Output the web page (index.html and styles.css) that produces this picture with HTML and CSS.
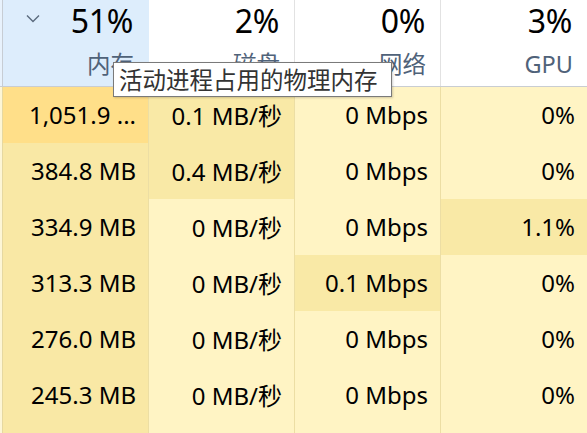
FILE: index.html
```html
<!DOCTYPE html>
<html lang="zh-CN">
<head>
<meta charset="utf-8">
<title>任务管理器</title>
<link rel="stylesheet" href="styles.css">
</head>
<body>
<div class="tm">
  <div class="head">
    <div class="lead lead-head"></div>
    <div class="hcell sorted">
      <svg class="chev" width="14" height="9" viewBox="0 0 14 9"><path d="M1 1.5 L7 7.5 L13 1.5" fill="none" stroke="#5b6b7e" stroke-width="1.4"/></svg>
      <div class="pct">51%</div>
      <div class="lbl">内存</div>
    </div>
    <div class="hcell"><div class="pct">2%</div><div class="lbl">磁盘</div></div>
    <div class="hcell"><div class="pct">0%</div><div class="lbl">网络</div></div>
    <div class="hcell last"><div class="pct">3%</div><div class="lbl">GPU</div></div>
  </div>
  <div class="row">
    <div class="lead"></div>
    <div class="cell h3">1,051.9 ...</div>
    <div class="cell h1">0.1 MB/秒</div>
    <div class="cell">0 Mbps</div>
    <div class="cell last">0%</div>
  </div>
  <div class="row">
    <div class="lead"></div>
    <div class="cell h2">384.8 MB</div>
    <div class="cell h1">0.4 MB/秒</div>
    <div class="cell">0 Mbps</div>
    <div class="cell last">0%</div>
  </div>
  <div class="row">
    <div class="lead"></div>
    <div class="cell h2">334.9 MB</div>
    <div class="cell">0 MB/秒</div>
    <div class="cell">0 Mbps</div>
    <div class="cell last h1">1.1%</div>
  </div>
  <div class="row">
    <div class="lead"></div>
    <div class="cell h2">313.3 MB</div>
    <div class="cell">0 MB/秒</div>
    <div class="cell h1">0.1 Mbps</div>
    <div class="cell last">0%</div>
  </div>
  <div class="row">
    <div class="lead"></div>
    <div class="cell h2">276.0 MB</div>
    <div class="cell">0 MB/秒</div>
    <div class="cell">0 Mbps</div>
    <div class="cell last">0%</div>
  </div>
  <div class="row">
    <div class="lead"></div>
    <div class="cell h2">245.3 MB</div>
    <div class="cell">0 MB/秒</div>
    <div class="cell">0 Mbps</div>
    <div class="cell last">0%</div>
  </div>
  <div class="row">
    <div class="lead"></div>
    <div class="cell h2"></div>
    <div class="cell"></div>
    <div class="cell"></div>
    <div class="cell last"></div>
  </div>
  <div class="tip">活动进程占用的物理内存</div>
</div>
</body>
</html>
```

FILE: styles.css
```css
html, body {
  margin: 0;
  padding: 0;
  background: #fff4c4;
  overflow: hidden;
}

.tm {
  position: relative;
  width: 587px;
  height: 433px;
  overflow: hidden;
  font-family: "Noto Sans", "Noto Sans CJK SC", sans-serif;
  color: #000;
}

.head {
  display: grid;
  grid-template-columns: 3px 146px 146px 146px 146px;
  height: 86px;
  border-bottom: 1px solid #c9cdd2;
  background: #fff;
}

.lead {
  border-right: 1px solid #e6d8a0;
  background: #fdf6d6;
}

.lead-head {
  background: #e8f2fc;
  border-right: 1px solid #c7cdd4;
}

.hcell {
  position: relative;
  display: flex;
  flex-direction: column;
  align-items: flex-end;
  padding-right: 14px;
  border-right: 1px solid #e2e2e2;
}

.hcell.sorted {
  background: #ddedfc;
  border-right-color: #ddedfc;
}

.hcell.last {
  border-right: none;
}

.chev {
  position: absolute;
  left: 23px;
  top: 14px;
}

.pct {
  font-size: 32px;
  line-height: 40px;
  margin-top: 1px;
  padding-right: 1px;
  letter-spacing: -0.3px;
}

.lbl {
  font-size: 23.5px;
  line-height: 32px;
  margin-top: 7px;
  color: #4f6279;
}

.row {
  display: grid;
  grid-template-columns: 3px 146px 146px 146px 146px;
  height: 56px;
}

.cell {
  display: flex;
  align-items: center;
  justify-content: flex-end;
  padding-right: 12px;
  padding-bottom: 2px;
  font-size: 24px;
  letter-spacing: 0;
  background: #fff4c4;
  border-right: 1px solid #ecdea4;
}

.cell.last {
  border-right: none;
  padding-right: 12px;
}

.cell.h1 {
  background: #f9e9a6;
}

.cell.h2 {
  background: #f9e8a5;
}

.cell.h3 {
  background: #ffdf89;
}

.tip {
  position: absolute;
  left: 113px;
  top: 62px;
  width: 272px;
  height: 33px;
  padding-left: 5px;
  border: 1px solid #7a7a7a;
  background: #fff;
  color: #333;
  font-family: "Noto Sans CJK SC", sans-serif;
  font-size: 23.5px;
  line-height: 33px;
  white-space: nowrap;
  box-shadow: 1px 1px 2px rgba(0, 0, 0, 0.18);
}
```
